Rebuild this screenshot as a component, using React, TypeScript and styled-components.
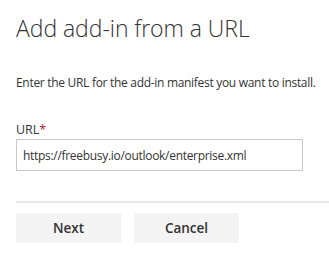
import React from 'react';
import styled, { createGlobalStyle } from 'styled-components';

const GlobalStyle = createGlobalStyle`
    html, body {
        margin: 0;
        padding: 0;
        background: #ffffff;
    }
    body {
        font-family: "Open Sans", "Noto Sans", sans-serif;
        color: #333333;
    }
`;

const Panel = styled.div`
    width: 329px;
    height: 256px;
    padding: 12px 0 0 16px;
    box-sizing: border-box;
    display: flex;
    flex-direction: column;
    overflow: hidden;
`;

const Title = styled.h1`
    margin: 0;
    font-size: 23px;
    font-weight: 300;
    line-height: 32px;
    color: #333333;
    letter-spacing: -0.05px;
`;

const Description = styled.p`
    margin: 30px 0 0 0;
    font-size: 12px;
    line-height: 17px;
    color: #333333;
    letter-spacing: -0.3px;
`;

const Field = styled.div`
    display: flex;
    flex-direction: column;
    margin-top: 30px;
    width: 287px;
`;

const Label = styled.label`
    font-size: 12.5px;
    line-height: 17px;
    margin-bottom: 1px;
    color: #333333;
`;

const Required = styled.span`
    color: #a4262c;
`;

const Input = styled.input`
    box-sizing: border-box;
    width: 287px;
    height: 32px;
    border: 1px solid #c8c8c8;
    padding: 0 6px;
    font-family: "Open Sans", "Noto Sans", sans-serif;
    font-size: 12px;
    letter-spacing: -0.3px;
    color: #333333;
    outline: none;
`;

const Divider = styled.hr`
    margin: 30px 0 0 0;
    border: none;
    height: 2px;
    background: #e8e8e8;
`;

const Actions = styled.div`
    display: flex;
    gap: 13px;
    margin-top: 10px;
`;

const Button = styled.button`
    width: 105px;
    height: 30px;
    border: none;
    background: #f4f4f4;
    font-family: "Open Sans", "Noto Sans", sans-serif;
    font-size: 13.5px;
    font-weight: 600;
    color: #333333;
    padding: 0;
`;

export default function App() {
    return (
        <>
            <GlobalStyle />
            <Panel>
                <Title>Add add-in from a URL</Title>
                <Description>Enter the URL for the add-in manifest you want to install.</Description>
                <Field>
                    <Label>URL<Required>*</Required></Label>
                    <Input defaultValue="https://freebusy.io/outlook/enterprise.xml" />
                </Field>
                <Divider />
                <Actions>
                    <Button>Next</Button>
                    <Button>Cancel</Button>
                </Actions>
            </Panel>
        </>
    );
}
